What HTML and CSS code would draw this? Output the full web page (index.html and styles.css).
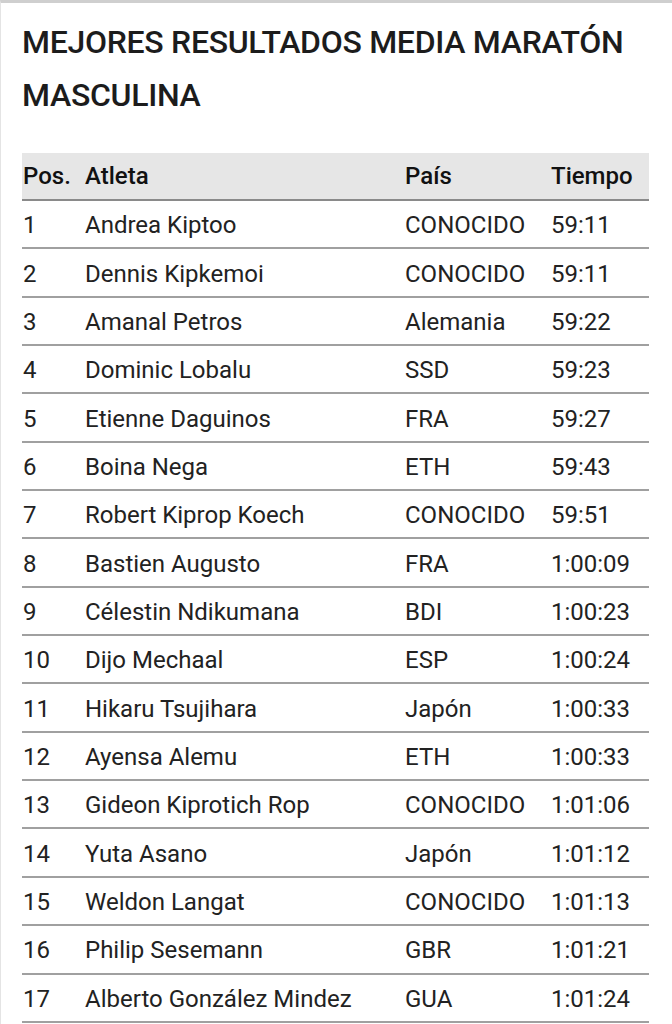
FILE: index.html
```html
<!DOCTYPE html>
<html lang="es">
<head>
<meta charset="utf-8">
<link rel="stylesheet" href="styles.css">
</head>
<body>
<div class="page">
  <h1 class="title">MEJORES RESULTADOS MEDIA MARATÓN MASCULINA</h1>
  <table class="results">
    <colgroup>
      <col class="c-pos"><col class="c-name"><col class="c-country"><col class="c-time">
    </colgroup>
    <thead>
      <tr><th>Pos.</th><th>Atleta</th><th>País</th><th>Tiempo</th></tr>
    </thead>
    <tbody>
      <tr><td>1</td><td>Andrea Kiptoo</td><td>CONOCIDO</td><td>59:11</td></tr>
      <tr><td>2</td><td>Dennis Kipkemoi</td><td>CONOCIDO</td><td>59:11</td></tr>
      <tr><td>3</td><td>Amanal Petros</td><td>Alemania</td><td>59:22</td></tr>
      <tr><td>4</td><td>Dominic Lobalu</td><td>SSD</td><td>59:23</td></tr>
      <tr><td>5</td><td>Etienne Daguinos</td><td>FRA</td><td>59:27</td></tr>
      <tr><td>6</td><td>Boina Nega</td><td>ETH</td><td>59:43</td></tr>
      <tr><td>7</td><td>Robert Kiprop Koech</td><td>CONOCIDO</td><td>59:51</td></tr>
      <tr><td>8</td><td>Bastien Augusto</td><td>FRA</td><td>1:00:09</td></tr>
      <tr><td>9</td><td>Célestin Ndikumana</td><td>BDI</td><td>1:00:23</td></tr>
      <tr><td>10</td><td>Dijo Mechaal</td><td>ESP</td><td>1:00:24</td></tr>
      <tr><td>11</td><td>Hikaru Tsujihara</td><td>Japón</td><td>1:00:33</td></tr>
      <tr><td>12</td><td>Ayensa Alemu</td><td>ETH</td><td>1:00:33</td></tr>
      <tr><td>13</td><td>Gideon Kiprotich Rop</td><td>CONOCIDO</td><td>1:01:06</td></tr>
      <tr><td>14</td><td>Yuta Asano</td><td>Japón</td><td>1:01:12</td></tr>
      <tr><td>15</td><td>Weldon Langat</td><td>CONOCIDO</td><td>1:01:13</td></tr>
      <tr><td>16</td><td>Philip Sesemann</td><td>GBR</td><td>1:01:21</td></tr>
      <tr><td>17</td><td>Alberto González Mindez</td><td>GUA</td><td>1:01:24</td></tr>
    </tbody>
  </table>
</div>
</body>
</html>
```

FILE: styles.css
```css
html, body {
  margin: 0;
  padding: 0;
  background: #ffffff;
}
body {
  font-family: Roboto, "Liberation Sans", Arial, sans-serif;
  color: #1a1a1a;
}
.page {
  min-height: 1024px;
  box-sizing: border-box;
  border-top: 3px solid #cfcfcf;
  border-left: 1px solid #e4e4e4;
  padding: 0 0 0 21px;
}
.title {
  margin: 0;
  padding-top: 13px;
  width: 640px;
  font-size: 32px;
  font-weight: 500;
  line-height: 53px;
  letter-spacing: -0.3px;
  color: #1c1c1c;
}
.results {
  margin-top: 31px;
  width: 627px;
  border-collapse: collapse;
  table-layout: fixed;
  font-size: 24px;
}
.c-pos { width: 62px; }
.c-name { width: 320px; }
.c-country { width: 146px; }
.c-time { width: 99px; }
.results th {
  background: #e6e6e6;
  font-weight: 500;
  text-align: left;
  height: 46px;
  padding: 0 0 0 1px;
  border-bottom: 2px solid #8a8a8a;
  color: #111;
}
.results td {
  height: 44.35px;
  padding: 2px 0 0 1px;
  border-bottom: 2px solid #a0a0a0;
  color: #222;
}
```
